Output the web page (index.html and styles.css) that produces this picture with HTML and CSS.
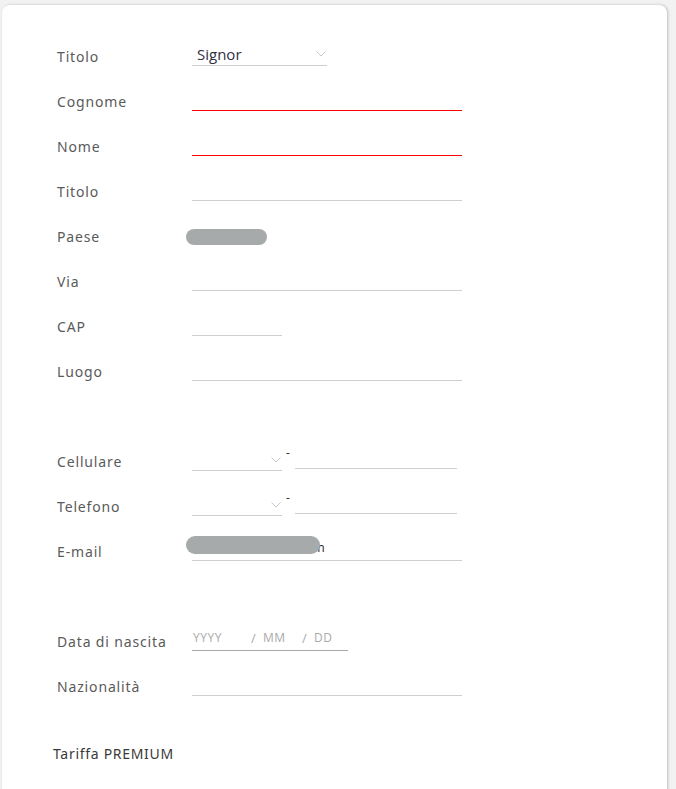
FILE: index.html
```html
<!DOCTYPE html>
<html lang="it">
<head>
  <meta charset="UTF-8">
  <meta name="viewport" content="width=device-width, initial-scale=1.0">
  <title>Dati personali</title>
  <link rel="stylesheet" href="styles.css">
</head>
<body>
  <div class="card">
    <form class="form">
      <!-- Dati anagrafici -->
      <div class="row">
        <span class="label">Titolo</span>
        <div class="field select select-title">
          <span class="value">Signor</span>
          <svg class="chevron" width="10" height="6" viewBox="0 0 10 6"><path d="M0.5 0.5 L5 5 L9.5 0.5" fill="none" stroke="#c8c8c8" stroke-width="1"/></svg>
        </div>
      </div>
      <div class="row">
        <span class="label">Cognome</span>
        <div class="field field-wide field-error"></div>
      </div>
      <div class="row">
        <span class="label">Nome</span>
        <div class="field field-wide field-error"></div>
      </div>
      <div class="row">
        <span class="label">Titolo</span>
        <div class="field field-wide"></div>
      </div>
      <div class="row">
        <span class="label">Paese</span>
        <div class="field field-plain">
          <span class="blur blur-country"></span>
        </div>
      </div>
      <div class="row">
        <span class="label">Via</span>
        <div class="field field-wide"></div>
      </div>
      <div class="row">
        <span class="label">CAP</span>
        <div class="field field-short"></div>
      </div>
      <div class="row">
        <span class="label">Luogo</span>
        <div class="field field-wide"></div>
      </div>

      <!-- Contatti -->
      <div class="row section">
        <span class="label">Cellulare</span>
        <div class="phone">
          <div class="field select field-short">
            <svg class="chevron" width="10" height="6" viewBox="0 0 10 6"><path d="M0.5 0.5 L5 5 L9.5 0.5" fill="none" stroke="#c8c8c8" stroke-width="1"/></svg>
          </div>
          <span class="dash">-</span>
          <div class="field field-number"></div>
        </div>
      </div>
      <div class="row">
        <span class="label">Telefono</span>
        <div class="phone">
          <div class="field select field-short">
            <svg class="chevron" width="10" height="6" viewBox="0 0 10 6"><path d="M0.5 0.5 L5 5 L9.5 0.5" fill="none" stroke="#c8c8c8" stroke-width="1"/></svg>
          </div>
          <span class="dash">-</span>
          <div class="field field-number"></div>
        </div>
      </div>
      <div class="row">
        <span class="label">E-mail</span>
        <div class="field field-wide">
          <span class="mail-tail">a.com</span>
          <span class="blur blur-mail"></span>
        </div>
      </div>

      <!-- Altri dati -->
      <div class="row section">
        <span class="label">Data di nascita</span>
        <div class="field field-date">
          <span class="part part-year">YYYY</span>
          <span class="slash">/</span>
          <span class="part part-month">MM</span>
          <span class="slash">/</span>
          <span class="part">DD</span>
        </div>
      </div>
      <div class="row">
        <span class="label">Nazionalità</span>
        <div class="field field-wide"></div>
      </div>

      <p class="tariff">Tariffa PREMIUM</p>
    </form>
  </div>
</body>
</html>
```

FILE: styles.css
```css
/* Reset di base */
* {
  margin: 0;
  padding: 0;
  box-sizing: border-box;
}
body {
  font-family: "Noto Sans", "Open Sans", sans-serif;
  background: #f2f2f2;
  color: #444;
  overflow: hidden;
}

/* Scheda */
.card {
  margin: 5px 9px 0 2px;
  min-height: 800px;
  background: #fff;
  border-radius: 8px 8px 0 0;
  box-shadow: 1px 0 3px rgba(0, 0, 0, 0.22);
  padding: 16px 0 0 55px;
}

/* Righe del modulo */
.row {
  display: flex;
  align-items: flex-end;
  height: 45px;
}
.row.section {
  margin-top: 45px;
}
.label {
  flex: none;
  width: 135px;
  font-size: 14px;
  line-height: 16px;
  padding-bottom: 1px;
  letter-spacing: 0.85px;
  color: #5a5a5a;
}

/* Campi */
.field {
  position: relative;
  height: 22px;
  line-height: 20px;
  border-bottom: 1px solid #cfcfcf;
  font-family: "Open Sans", sans-serif;
  font-size: 14px;
  color: #333;
}
.field-wide {
  width: 270px;
}
.field-short {
  width: 90px;
}
.field-error {
  border-bottom-color: #ff0000;
}
.field-plain {
  border-bottom: none;
  width: 270px;
}
.select-title {
  width: 135px;
}
.select .value {
  padding-left: 5px;
  font-size: 15px;
  color: #2f2f45;
}
.select .chevron {
  position: absolute;
  right: 1px;
  top: 7px;
}

/* Telefono */
.phone {
  display: flex;
  align-items: flex-end;
}
.phone .select .chevron {
  top: 8px;
}
.dash {
  width: 13px;
  padding-left: 4px;
  align-self: flex-start;
  font-size: 12px;
  line-height: 12px;
  color: #333;
}
.field-number {
  width: 162px;
  margin-bottom: 2px;
}

/* Dati oscurati */
.blur {
  position: absolute;
  background: #a7aaab;
  border-radius: 9px;
  filter: blur(0.6px);
}
.blur-country {
  left: -6px;
  top: 5px;
  width: 81px;
  height: 16px;
}
.blur-mail {
  left: -6px;
  top: -3px;
  width: 134px;
  height: 18px;
}
.mail-tail {
  position: absolute;
  left: 96px;
  top: -2px;
  font-size: 13px;
  color: #333;
}

/* Data */
.field-date {
  width: 156px;
  display: flex;
  align-items: center;
  border-bottom-color: #a9a9a9;
  height: 26px;
  font-size: 12px;
  letter-spacing: 0.5px;
  color: #aaa;
}
.part {
  padding-left: 1px;
}
.part-year {
  width: 59px;
}
.part-month {
  width: 40px;
}
.slash {
  width: 11px;
  font-size: 13px;
}

/* Tariffa */
.tariff {
  margin: 48px 0 0 -4px;
  font-size: 14px;
  line-height: 20px;
  letter-spacing: 0.7px;
  color: #3a3a3a;
}
```
